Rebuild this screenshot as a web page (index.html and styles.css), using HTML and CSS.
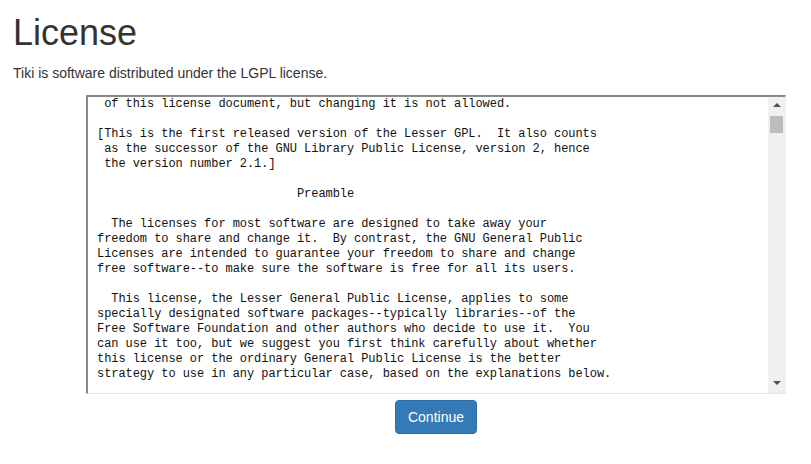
FILE: index.html
```
<!DOCTYPE html>
<html lang="en">
<head>
    <meta charset="UTF-8">
    <title>License</title>
    <link rel="stylesheet" href="styles.css">
</head>
<body>
    <div class="page">
        <h1>License</h1>
        <p class="intro">Tiki is software distributed under the LGPL license.</p>
        <div class="license-wrap">
            <div class="license-box">
                <pre class="license-text"> of this license document, but changing it is not allowed.

[This is the first released version of the Lesser GPL.  It also counts
 as the successor of the GNU Library Public License, version 2, hence
 the version number 2.1.]

                            Preamble

  The licenses for most software are designed to take away your
freedom to share and change it.  By contrast, the GNU General Public
Licenses are intended to guarantee your freedom to share and change
free software--to make sure the software is free for all its users.

  This license, the Lesser General Public License, applies to some
specially designated software packages--typically libraries--of the
Free Software Foundation and other authors who decide to use it.  You
can use it too, but we suggest you first think carefully about whether
this license or the ordinary General Public License is the better
strategy to use in any particular case, based on the explanations below.
</pre>
                <div class="scrollbar">
                    <span class="arrow up"></span>
                    <div class="track"><span class="thumb"></span></div>
                    <span class="arrow down"></span>
                </div>
            </div>
            <button class="btn-continue">Continue</button>
        </div>
    </div>
</body>
</html>
```

FILE: styles.css
```
body, html {
    margin: 0;
    padding: 0;
    background-color: #fff;
    color: #333;
    font-family: "Liberation Sans", Arial, sans-serif;
    font-size: 14px;
}
.page {
    padding: 0 13px;
}
h1 {
    margin: 0;
    padding-top: 13px;
    font-size: 36px;
    font-weight: 500;
    line-height: 40px;
    color: #333;
}
.intro {
    margin: 10px 0 0;
    line-height: 20px;
}
.license-wrap {
    margin: 12px 0 0 73px;
    width: 700px;
    display: flex;
    flex-direction: column;
    align-items: center;
}
.license-box {
    width: 100%;
    height: 299px;
    box-sizing: border-box;
    display: flex;
    border-style: solid;
    border-width: 2px 1px 1px 2px;
    border-color: #8a8a8a #f0f0f0 #e6e6e6 #8a8a8a;
    overflow: hidden;
}
.license-text {
    flex: 1;
    margin: 0;
    padding: 0 0 0 9px;
    font-family: "Liberation Mono", "DejaVu Sans Mono", monospace;
    font-size: 12px;
    letter-spacing: -0.06px;
    line-height: 15px;
    color: #111;
    overflow: hidden;
    white-space: pre;
}
.scrollbar {
    width: 17px;
    flex: 0 0 17px;
    background-color: #f0f0f0;
    display: flex;
    flex-direction: column;
    align-items: center;
}
.arrow {
    width: 0;
    height: 0;
    border-left: 4px solid transparent;
    border-right: 4px solid transparent;
}
.arrow.up {
    margin-top: 6px;
    border-bottom: 4px solid #505050;
}
.arrow.down {
    margin-bottom: 8px;
    border-top: 4px solid #505050;
}
.track {
    flex: 1;
    width: 100%;
    display: flex;
    justify-content: center;
    padding-top: 9px;
}
.thumb {
    width: 13px;
    height: 17px;
    background-color: #bdbdbd;
}
.btn-continue {
    margin-top: 6px;
    padding: 6px 12px;
    font-family: "Liberation Sans", Arial, sans-serif;
    font-size: 14px;
    line-height: 20px;
    color: #fff;
    background-color: #337ab7;
    border: 1px solid #2e6da4;
    border-radius: 4px;
    cursor: pointer;
}
```
